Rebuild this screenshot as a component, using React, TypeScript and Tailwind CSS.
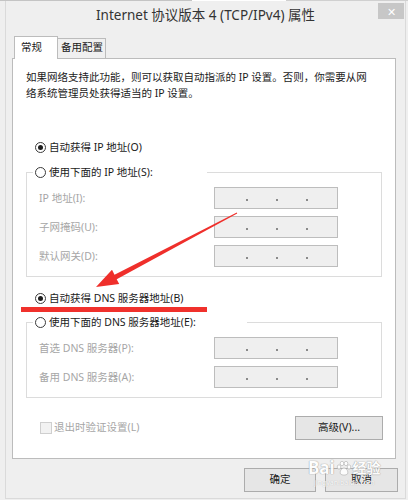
import React from "react";

const FONT = { fontFamily: '"Noto Sans", "Noto Sans CJK SC", sans-serif' };

function Radio({ checked }: { checked?: boolean }) {
  return (
    <span className="w-[11px] h-[11px] rounded-full border border-[#3a3a3a] bg-white flex items-center justify-center shrink-0">
      {checked && <span className="w-[5px] h-[5px] rounded-full bg-[#1e1e1e]" />}
    </span>
  );
}

function IpField() {
  return (
    <div className="w-[124px] h-[22px] border border-[#bdbdbd] bg-[#efefef] flex items-center pl-[31px] gap-[28px]">
      <span className="w-[2px] h-[2px] mt-[3px] bg-[#8a8a8a]" />
      <span className="w-[2px] h-[2px] mt-[3px] bg-[#8a8a8a]" />
      <span className="w-[2px] h-[2px] mt-[3px] bg-[#8a8a8a]" />
    </div>
  );
}

function FieldRow({ label }: { label: string }) {
  return (
    <div className="flex items-center pl-[12px]">
      <span className="w-[175px] text-[10.5px] leading-[16px] text-[#a6a6a6]">{label}</span>
      <IpField />
    </div>
  );
}

function GroupBox({ legend, legendWidth, rows }: { legend: string; legendWidth: string; rows: string[] }) {
  return (
    <div className="mx-[13px] border border-[#dcdcdc] pb-[9px]">
      <div className={`-mt-[9px] ml-[6px] pl-[2px] h-[16px] bg-white flex items-center gap-[3px] ${legendWidth}`}>
        <Radio />
        <span className="text-[10.5px] leading-[16px] text-[#1a1a1a] whitespace-nowrap">{legend}</span>
      </div>
      <div className="mt-[7px] flex flex-col gap-[7px]">
        {rows.map((r) => (
          <FieldRow key={r} label={r} />
        ))}
      </div>
    </div>
  );
}

function Btn({ label, w }: { label: string; w: string }) {
  return (
    <div className={`h-[24px] ${w} border border-[#acacac] bg-[#e6e6e6] flex items-center justify-center text-[10.5px] text-[#1a1a1a]`}>
      {label}
    </div>
  );
}

// baidu paw mark used in the watermark
function Paw() {
  return (
    <svg width="16" height="16" viewBox="0 0 16 16" className="mx-[1px] mb-[2px]">
      <g fill="#ffffff" stroke="#a8a8a8" strokeWidth="0.6">
        <ellipse cx="3" cy="7" rx="1.8" ry="2.2" />
        <ellipse cx="6" cy="3.5" rx="1.8" ry="2.2" />
        <ellipse cx="10" cy="3.5" rx="1.8" ry="2.2" />
        <ellipse cx="13" cy="7" rx="1.8" ry="2.2" />
        <path d="M8 8 C5 8 3.5 12 4.5 14 C6 15.5 10 15.5 11.5 14 C12.5 12 11 8 8 8 Z" />
      </g>
    </svg>
  );
}

export default function App() {
  return (
    <div className="w-[408px] h-[500px] bg-[#efefef] relative overflow-hidden" style={FONT}>
      {/* stray strip from window behind */}
      <div className="flex h-[1px]">
        <div className="w-[192px] bg-[#c4c4c4]" />
        <div className="w-[94px] bg-white" />
        <div className="flex-1 bg-[#d0d0d0]" />
      </div>

      <div className="ml-[5px] mr-[2px] h-[498px] border-x border-b border-[#dadada] bg-[#efefef] flex flex-col">
        {/* Title bar */}
        <div className="h-[33px] relative flex items-start justify-center pt-[4px]">
          <span className="text-[13.5px] leading-[20px] text-[#333]">Internet 协议版本 4 (TCP/IPv4) 属性</span>
          <div className="absolute right-[1px] top-[2px] w-[26px] h-[16px] bg-[#c7c7c7] flex items-center justify-center text-white text-[11px] leading-none">
            ✕
          </div>
        </div>

        {/* Tabs */}
        <div className="pl-[7px] flex items-end h-[24px] relative z-10">
          <div className="ml-[1px] w-[44px] h-[23px] bg-white border-t border-x border-[#bcbcbc] -mb-px pl-[6px] pt-[3px] text-[10.5px] text-[#1a1a1a]">
            常规
          </div>
          <div className="w-[48px] h-[20px] bg-[#f0f0f0] border-t border-r border-[#bcbcbc] pl-[3px] pt-[1px] text-[10.5px] text-[#1a1a1a]">
            备用配置
          </div>
        </div>

        {/* Panel */}
        <div className="ml-[6px] mr-[9px] h-[401px] bg-white border border-[#bcbcbc] flex flex-col">
          <p className="pt-[10px] pl-[13px] text-[10.5px] leading-[16px] text-[#1a1a1a] whitespace-nowrap">
            如果网络支持此功能，则可以获取自动指派的 IP 设置。否则，你需要从网
            <br />
            络系统管理员处获得适当的 IP 设置。
          </p>

          <div className="mt-[38px] pl-[22px] h-[16px] flex items-center gap-[3px]">
            <Radio checked />
            <span className="text-[10.5px] leading-[16px] text-[#1a1a1a]">自动获得 IP 地址(O)</span>
          </div>

          <div className="mt-[17px]">
            <GroupBox legend="使用下面的 IP 地址(S):" legendWidth="w-[174px]" rows={["IP 地址(I):", "子网掩码(U):", "默认网关(D):"]} />
          </div>

          <div className="mt-[13px] pl-[22px] h-[16px] flex items-center gap-[3px]">
            <Radio checked />
            <span className="text-[10.5px] leading-[16px] text-[#1a1a1a]">自动获得 DNS 服务器地址(B)</span>
          </div>

          <div className="mt-[16px]">
            <GroupBox legend="使用下面的 DNS 服务器地址(E):" legendWidth="w-[214px]" rows={["首选 DNS 服务器(P):", "备用 DNS 服务器(A):"]} />
          </div>

          <div className="mt-[18px] pl-[27px] pr-[12px] flex items-center justify-between">
            <div className="flex items-center gap-[2px]">
              <span className="w-[12px] h-[12px] border border-[#cfcfcf] bg-[#f2f2f2]" />
              <span className="text-[10.5px] text-[#a6a6a6]">退出时验证设置(L)</span>
            </div>
            <Btn label="高级(V)..." w="w-[88px]" />
          </div>
        </div>

        {/* Dialog buttons */}
        <div className="mt-[9px] pr-[7px] flex justify-end gap-[9px]">
          <Btn label="确定" w="w-[72px]" />
          <Btn label="取消" w="w-[73px]" />
        </div>
      </div>

      {/* Baidu watermark */}
      <div className="absolute left-[308px] top-[458px] flex flex-col items-center pointer-events-none opacity-90">
        <div className="flex items-end text-white leading-[20px] font-bold" style={{ textShadow: "0 0 1px #9a9a9a, 0 0 1px #9a9a9a" }}>
          <span className="text-[17px]">Bai</span>
          <Paw />
          <span className="text-[14px]">经验</span>
        </div>
        <span className="text-[7px] leading-[9px] text-white" style={{ textShadow: "0 0 1px #a0a0a0" }}>
          jingyan.baidu.com
        </span>
      </div>

      {/* red annotation */}
      <svg className="absolute left-0 top-0 pointer-events-none" width="408" height="500" viewBox="0 0 408 500">
        <rect x="21" y="307" width="186" height="5" fill="#f0312c" />
        <polygon
          points="237.2,213.5 236.8,212.5 114.5,274.8 112,269.7 96,287 119.2,284.1 116.7,279.2"
          fill="#ef2f2b"
        />
      </svg>
    </div>
  );
}
